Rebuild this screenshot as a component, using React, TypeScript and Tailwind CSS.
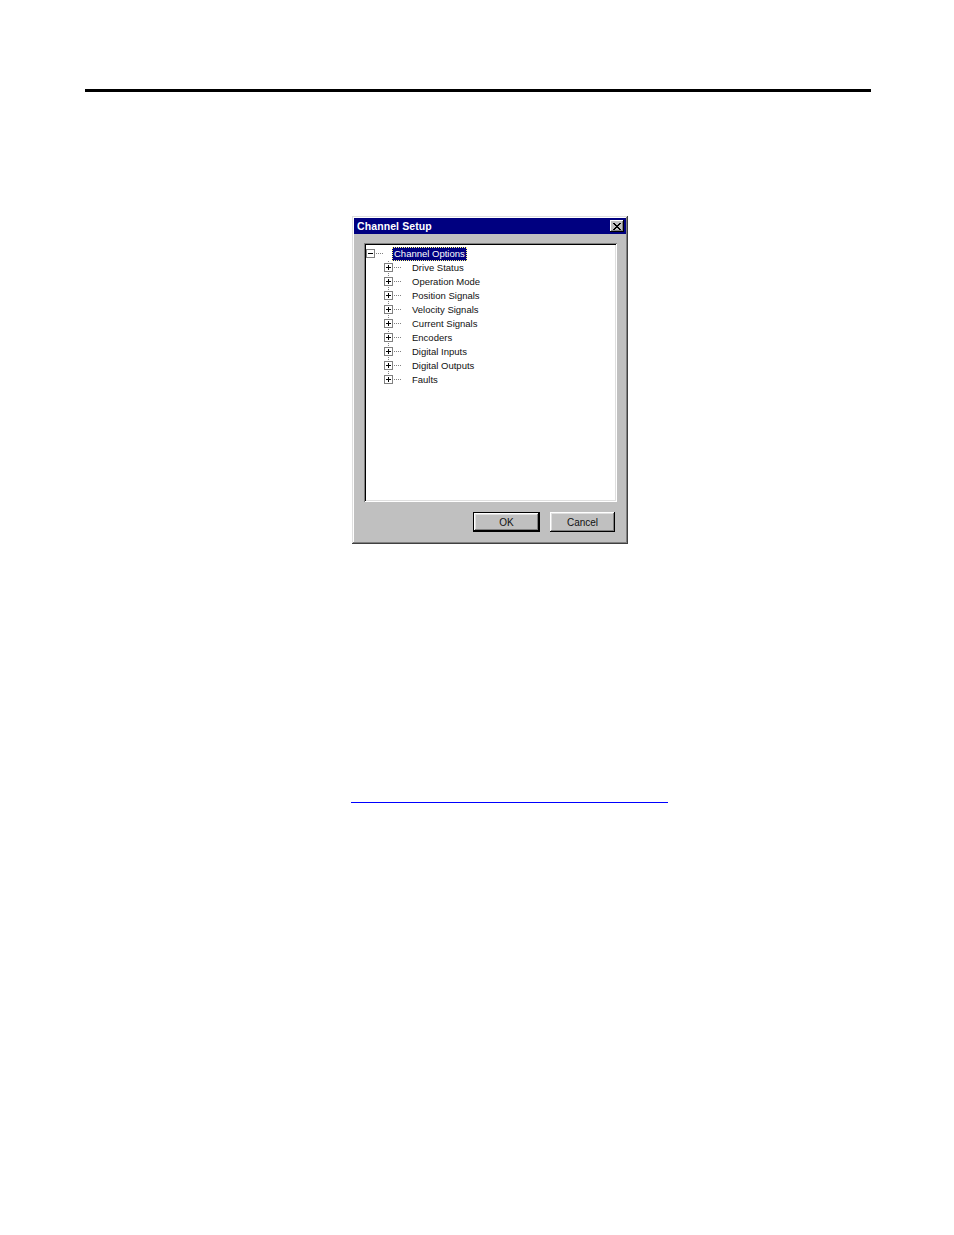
import React from "react";

const children = [
  "Drive Status",
  "Operation Mode",
  "Position Signals",
  "Velocity Signals",
  "Current Signals",
  "Encoders",
  "Digital Inputs",
  "Digital Outputs",
  "Faults",
];

function RootConnector() {
  return (
    <svg width="26" height="14" className="shrink-0 block" shapeRendering="crispEdges">
      <rect x="0.5" y="2.5" width="8" height="8" fill="#fff" stroke="#808080" />
      <rect x="2" y="6" width="5" height="1" fill="#000" />
      {[10, 12, 14, 16].map((x) => (
        <rect key={x} x={x} y="6" width="1" height="1" fill="#808080" />
      ))}
    </svg>
  );
}

function ChildConnector({ last }: { last: boolean }) {
  const ys: number[] = [];
  for (let y = 0; y < 14; y += 2) {
    if (y >= 2 && y <= 10) continue;
    if (last && y > 10) continue;
    ys.push(y);
  }
  return (
    <svg width="44" height="14" className="shrink-0 block" shapeRendering="crispEdges">
      {ys.map((y) => (
        <rect key={y} x="22" y={y} width="1" height="1" fill="#808080" />
      ))}
      <rect x="18.5" y="2.5" width="8" height="8" fill="#fff" stroke="#808080" />
      <rect x="20" y="6" width="5" height="1" fill="#000" />
      <rect x="22" y="4" width="1" height="5" fill="#000" />
      {[28, 30, 32, 34].map((x) => (
        <rect key={x} x={x} y="6" width="1" height="1" fill="#808080" />
      ))}
    </svg>
  );
}

export default function App() {
  return (
    <div className="w-[954px] h-[1235px] bg-white overflow-hidden flex flex-col font-['Liberation_Sans',Arial,sans-serif]">
      <div className="mt-[89px] ml-[85px] w-[786px] h-[3px] bg-black shrink-0" />

      <div className="mt-[124px] ml-[352px] w-[276px] h-[328px] shrink-0 bg-[#c0c0c0] p-[2px] shadow-[inset_-1px_-1px_#404040,inset_1px_1px_#dfdfdf,inset_-2px_-2px_#808080,inset_2px_2px_#ffffff] flex flex-col">
        <div className="h-[16px] bg-[#000080] flex items-center justify-between pl-[3px] pr-[2px] shrink-0">
          <span className="text-white font-bold text-[10.5px] leading-none tracking-[0.1px]">
            Channel Setup
          </span>
          <div className="w-[14px] h-[12px] bg-[#c0c0c0] shadow-[inset_-1px_-1px_#000,inset_1px_1px_#fff,inset_-2px_-2px_#808080] flex items-center justify-center">
            <svg width="8" height="7" shapeRendering="crispEdges">
              {[0, 1, 2, 3, 4, 5, 6].map((i) => (
                <g key={i}>
                  <rect x={i} y={i} width="2" height="1" fill="#000" />
                  <rect x={6 - i} y={i} width="2" height="1" fill="#000" />
                </g>
              ))}
            </svg>
          </div>
        </div>

        <div className="mt-[9px] ml-[10px] w-[253px] h-[259px] shrink-0 bg-white p-[2px] shadow-[inset_1px_1px_#808080,inset_-1px_-1px_#ffffff,inset_2px_2px_#000000,inset_-2px_-2px_#dfdfdf]">
          <div className="pt-[2px] flex flex-col text-[9.5px] leading-none text-[#111]">
            <div className="h-[14px] flex items-center">
              <RootConnector />
              <span className="h-[14px] flex items-center px-[2px] bg-[#000080] text-white outline-1 outline-dotted outline-offset-[-1px] outline-[#ffff80]">
                Channel Options
              </span>
            </div>
            {children.map((c, i) => (
              <div key={c} className="h-[14px] flex items-center">
                <ChildConnector last={i === children.length - 1} />
                <span className="px-[2px]">{c}</span>
              </div>
            ))}
          </div>
        </div>

        <div className="mt-[10px] flex justify-end gap-[10px] pr-[11px] shrink-0">
          <div className="w-[67px] h-[20px] bg-[#c0c0c0] border border-black shadow-[inset_-1px_-1px_#000,inset_1px_1px_#fff,inset_-2px_-2px_#808080,inset_2px_2px_#dfdfdf] flex items-center justify-center text-[10px] text-[#111]">
            OK
          </div>
          <div className="w-[65px] h-[20px] bg-[#c0c0c0] shadow-[inset_-1px_-1px_#000,inset_1px_1px_#fff,inset_-2px_-2px_#808080,inset_2px_2px_#dfdfdf] flex items-center justify-center text-[10px] text-[#111]">
            Cancel
          </div>
        </div>
      </div>

      <div className="mt-[258px] ml-[351px] w-[317px] h-px bg-[#0000ff] shrink-0" />
    </div>
  );
}
